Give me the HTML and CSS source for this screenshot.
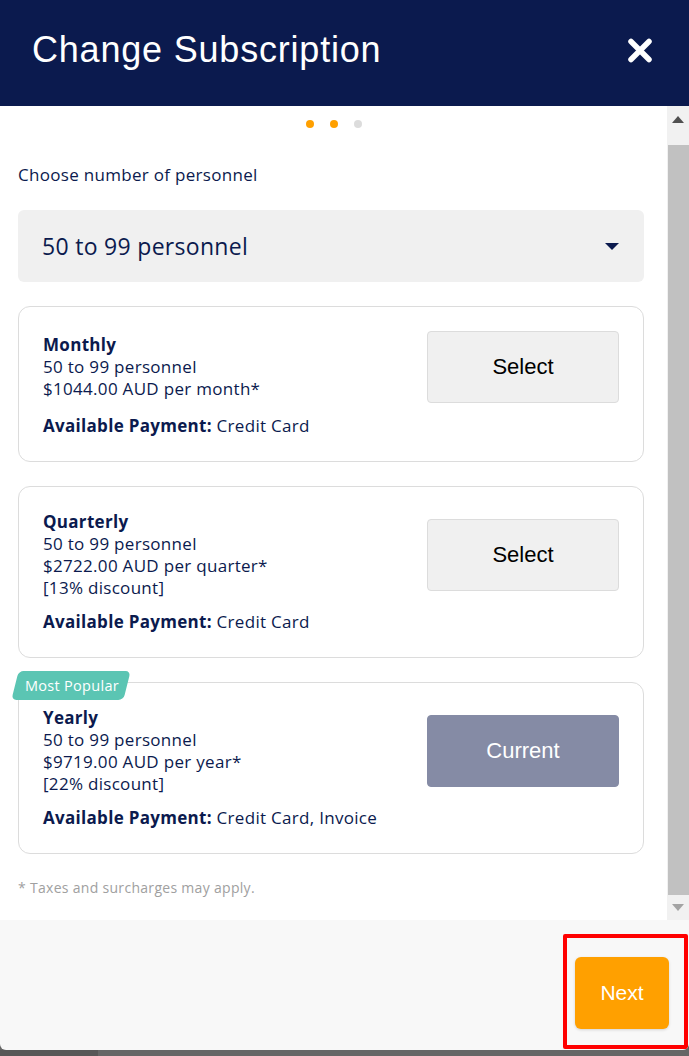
FILE: index.html
```html
<!DOCTYPE html>
<html lang="en">
<head>
  <meta charset="UTF-8" />
  <meta name="viewport" content="width=device-width, initial-scale=1.0"/>
  <title>Change Subscription</title>
  <link rel="stylesheet" href="styles.css">
</head>
<body>
  <div class="modal">
    <header class="modal-head">
      <h1>Change Subscription</h1>
      <button class="close-btn" aria-label="Close">
        <svg width="26" height="25" viewBox="0 0 26 25">
          <path d="M4 3.5 L22 21.5 M22 3.5 L4 21.5" stroke="#fff" stroke-width="5.5" stroke-linecap="round"/>
        </svg>
      </button>
    </header>

    <div class="modal-body">
      <div class="body-content">
        <div class="steps">
          <span class="dot on"></span>
          <span class="dot on"></span>
          <span class="dot"></span>
        </div>

        <p class="label">Choose number of personnel</p>
        <div class="picker">
          <span>50 to 99 personnel</span>
          <span class="caret"></span>
        </div>

        <div class="plan">
          <div class="plan-row">
            <div class="plan-info">
              <b>Monthly</b>
              <span>50 to 99 personnel</span>
              <span>$1044.00 AUD per month*</span>
            </div>
            <button class="plan-btn">Select</button>
          </div>
          <p class="payment"><b>Available Payment:</b> Credit Card</p>
        </div>

        <div class="plan">
          <div class="plan-row">
            <div class="plan-info">
              <b>Quarterly</b>
              <span>50 to 99 personnel</span>
              <span>$2722.00 AUD per quarter*</span>
              <span>[13% discount]</span>
            </div>
            <button class="plan-btn">Select</button>
          </div>
          <p class="payment"><b>Available Payment:</b> Credit Card</p>
        </div>

        <div class="plan">
          <span class="badge"><span>Most Popular</span></span>
          <div class="plan-row">
            <div class="plan-info">
              <b>Yearly</b>
              <span>50 to 99 personnel</span>
              <span>$9719.00 AUD per year*</span>
              <span>[22% discount]</span>
            </div>
            <button class="plan-btn current">Current</button>
          </div>
          <p class="payment"><b>Available Payment:</b> Credit Card, Invoice</p>
        </div>

        <p class="note">* Taxes and surcharges may apply.</p>
      </div>

      <div class="scrollbar">
        <span class="arrow up"></span>
        <span class="thumb"></span>
        <span class="arrow down"></span>
      </div>
    </div>

    <footer class="modal-foot">
      <div class="next-wrap">
        <button class="next-btn">Next</button>
      </div>
    </footer>
  </div>
  <div class="backdrop"><span class="backdrop-dark"></span></div>
</body>
</html>
```

FILE: styles.css
```css
* {
  box-sizing: border-box;
}
body {
  margin: 0;
  background: #666;
  font-family: 'Open Sans', sans-serif;
  color: #0b1a4e;
}
.modal {
  width: 689px;
  height: 1050px;
  background: #f8f8f8;
  border-radius: 0 0 6px 6px;
  display: flex;
  flex-direction: column;
  overflow: hidden;
}
.modal-head {
  height: 106px;
  background: #0b1a4e;
  display: flex;
  align-items: center;
  justify-content: space-between;
  padding: 0 36px 6px 32px;
}
.modal-head h1 {
  margin: 0;
  color: #fff;
  font-family: 'Liberation Sans', sans-serif;
  font-weight: normal;
  font-size: 36px;
  letter-spacing: 0.8px;
}
.close-btn {
  background: none;
  border: none;
  padding: 0;
  display: flex;
}
.modal-body {
  height: 814px;
  background: #fff;
  display: flex;
}
.body-content {
  flex: 1;
  padding: 14px 23px 0 18px;
  overflow: hidden;
}
.steps {
  display: flex;
  justify-content: center;
  gap: 16px;
  padding-left: 5px;
}
.dot {
  width: 8px;
  height: 8px;
  border-radius: 50%;
  background: #dcdcdc;
}
.dot.on {
  background: #ffa000;
}
.label {
  margin: 37px 0 0;
  font-size: 17px;
  line-height: 20px;
  letter-spacing: 0.3px;
}
.picker {
  margin-top: 25px;
  height: 72px;
  background: #f0f0f0;
  border-radius: 6px;
  display: flex;
  align-items: center;
  justify-content: space-between;
  padding: 0 25px 0 24px;
  font-size: 23px;
  letter-spacing: 0.3px;
}
.caret {
  width: 0;
  height: 0;
  border-left: 7px solid transparent;
  border-right: 7px solid transparent;
  border-top: 7px solid #0b1a4e;
}
.plan {
  position: relative;
  margin-top: 24px;
  border: 1px solid #dcdcdc;
  border-radius: 12px;
  padding: 24px;
  font-size: 17px;
  line-height: 22px;
  letter-spacing: 0.3px;
}
.plan-row {
  display: flex;
  align-items: center;
  justify-content: space-between;
}
.plan-info {
  display: flex;
  flex-direction: column;
}
.plan-info b, .payment b {
  font-weight: 700;
}
.plan-btn {
  width: 192px;
  height: 72px;
  background: #f0f0f0;
  border: 1px solid #dcdcdc;
  border-radius: 4px;
  font-family: 'Liberation Sans', sans-serif;
  font-size: 22px;
  letter-spacing: 0;
  color: #000;
}
.plan-btn.current {
  background: #858ba5;
  border-color: #858ba5;
  color: #fff;
}
.payment {
  margin: 12px 0 0;
}
.badge {
  position: absolute;
  left: -8px;
  top: -12px;
  width: 120px;
  height: 29px;
  display: flex;
  align-items: center;
  justify-content: center;
}
.badge::before {
  content: "";
  position: absolute;
  inset: 0 4px;
  background: #5bc5b3;
  border-radius: 5px;
  transform: skewX(-14deg);
}
.badge span {
  position: relative;
  color: #fff;
  font-size: 14.5px;
  letter-spacing: 0.3px;
  padding-left: 2px;
}
.note {
  margin: 24px 0 0;
  font-size: 14px;
  line-height: 20px;
  letter-spacing: 0.3px;
  color: #a0a0a0;
}
.scrollbar {
  width: 22px;
  background: #f1f1f1;
  display: flex;
  flex-direction: column;
  align-items: center;
}
.arrow {
  width: 0;
  height: 0;
  border-left: 6px solid transparent;
  border-right: 6px solid transparent;
}
.arrow.up {
  margin-top: 10px;
  border-bottom: 7px solid #505050;
}
.arrow.down {
  margin-top: 9px;
  border-top: 7px solid #a3a3a3;
}
.thumb {
  margin-top: 22px;
  align-self: flex-end;
  width: 21px;
  height: 750px;
  background: #c1c1c1;
}
.modal-foot {
  flex: 1;
  display: flex;
  justify-content: flex-end;
  padding: 37px 20px 0 0;
}
.next-wrap {
  position: relative;
}
.next-wrap::after {
  content: "";
  position: absolute;
  left: -12px;
  top: -23px;
  width: 117px;
  height: 107px;
  border: 4px solid #ff0000;
  border-radius: 2px;
}
.next-btn {
  width: 94px;
  height: 72px;
  background: #ffa000;
  border: none;
  border-radius: 6px;
  box-shadow: 0 1px 3px rgba(0,0,0,0.15);
  color: #fff;
  font-family: 'Liberation Sans', sans-serif;
  font-size: 21px;
}
.backdrop {
  height: 6px;
}
.backdrop-dark {
  display: block;
  width: 98px;
  height: 6px;
  background: #575757;
}
```
